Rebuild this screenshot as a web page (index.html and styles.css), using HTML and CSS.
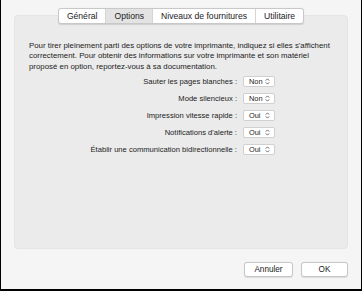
FILE: index.html
```html
<!DOCTYPE html>
<html lang="fr">
<head>
  <meta charset="UTF-8">
  <title>Options de l'imprimante</title>
  <link rel="stylesheet" href="styles.css">
</head>
<body>
  <div class="window">
    <div class="panel">
      <div class="tabs">
        <span class="tab">Général</span>
        <span class="tab active">Options</span>
        <span class="tab">Niveaux de fournitures</span>
        <span class="tab">Utilitaire</span>
      </div>
      <p class="intro">Pour tirer pleinement parti des options de votre imprimante, indiquez si elles s'affichent correctement. Pour obtenir des informations sur votre imprimante et son matériel proposé en option, reportez-vous à sa documentation.</p>
      <div class="rows">
        <div class="row"><span class="label">Sauter les pages blanches :</span><span class="popup">Non<svg width="5" height="7" viewBox="0 0 5 7"><path d="M0.8 2.6 L2.5 0.9 L4.2 2.6 M0.8 4.4 L2.5 6.1 L4.2 4.4" fill="none" stroke="#555" stroke-width="0.9"/></svg></span></div>
        <div class="row"><span class="label">Mode silencieux :</span><span class="popup">Non<svg width="5" height="7" viewBox="0 0 5 7"><path d="M0.8 2.6 L2.5 0.9 L4.2 2.6 M0.8 4.4 L2.5 6.1 L4.2 4.4" fill="none" stroke="#555" stroke-width="0.9"/></svg></span></div>
        <div class="row"><span class="label">Impression vitesse rapide :</span><span class="popup">Oui<svg width="5" height="7" viewBox="0 0 5 7"><path d="M0.8 2.6 L2.5 0.9 L4.2 2.6 M0.8 4.4 L2.5 6.1 L4.2 4.4" fill="none" stroke="#555" stroke-width="0.9"/></svg></span></div>
        <div class="row"><span class="label">Notifications d'alerte :</span><span class="popup">Oui<svg width="5" height="7" viewBox="0 0 5 7"><path d="M0.8 2.6 L2.5 0.9 L4.2 2.6 M0.8 4.4 L2.5 6.1 L4.2 4.4" fill="none" stroke="#555" stroke-width="0.9"/></svg></span></div>
        <div class="row"><span class="label">Établir une communication bidirectionnelle :</span><span class="popup">Oui<svg width="5" height="7" viewBox="0 0 5 7"><path d="M0.8 2.6 L2.5 0.9 L4.2 2.6 M0.8 4.4 L2.5 6.1 L4.2 4.4" fill="none" stroke="#555" stroke-width="0.9"/></svg></span></div>
      </div>
    </div>
    <div class="footer">
      <button class="btn">Annuler</button>
      <button class="btn">OK</button>
    </div>
  </div>
</body>
</html>
```
FILE: styles.css
```css
body { margin: 0; background: #f5f5f5; font-family: "Liberation Sans", Arial, sans-serif; color: #222; }
.window {
  width: 362px;
  height: 291px;
  box-sizing: border-box;
  border-left: 1px solid #000;
  border-right: 1px solid #000;
  border-bottom: 2px solid #000;
  background: #f5f5f5;
  padding: 15px 13px 0 13px;
}
.panel {
  height: 234px;
  box-sizing: border-box;
  background: #ebebeb;
  border: 1px solid #e4e4e4;
  border-radius: 4px;
}

/* onglets posés sur le bord du panneau */
.tabs {
  display: flex;
  width: fit-content;
  margin: -8px auto 0;
  background: #fff;
  border: 1px solid #c8c8c8;
  border-radius: 3px;
  box-shadow: 0 0.5px 1px rgba(0,0,0,0.12);
  overflow: hidden;
}
.tab { font-size: 8.6px; line-height: 14px; padding: 0 8px; border-left: 1px solid #d4d4d4; }
.tab:first-child { border-left: none; }
.tab.active { background: #e3e3e3; }

.intro { margin: 17px 8px 0 14px; font-size: 7.85px; line-height: 10.4px; }

.rows { margin-top: 4px; padding-right: 72px; display: flex; flex-direction: column; gap: 6px; }
.row { display: flex; justify-content: flex-end; align-items: center; gap: 6px; }
.label { font-size: 7.6px; }
.popup {
  width: 32px;
  height: 11px;
  box-sizing: border-box;
  display: flex;
  align-items: center;
  justify-content: space-between;
  padding: 0 4px 0 5px;
  background: #fff;
  border: 1px solid #d0d0d0;
  border-radius: 2px;
  font-size: 7.4px;
}

.footer { display: flex; justify-content: flex-end; gap: 8px; margin-top: 13px; }
.btn {
  font-family: inherit;
  font-size: 8.2px;
  color: #222;
  height: 15px;
  padding: 0;
  background: #fff;
  border: 1px solid #c6c6c6;
  border-radius: 3px;
  box-shadow: 0 0.5px 1px rgba(0,0,0,0.1);
}
.btn:first-child { width: 49px; }
.btn:last-child { width: 47px; }
```
